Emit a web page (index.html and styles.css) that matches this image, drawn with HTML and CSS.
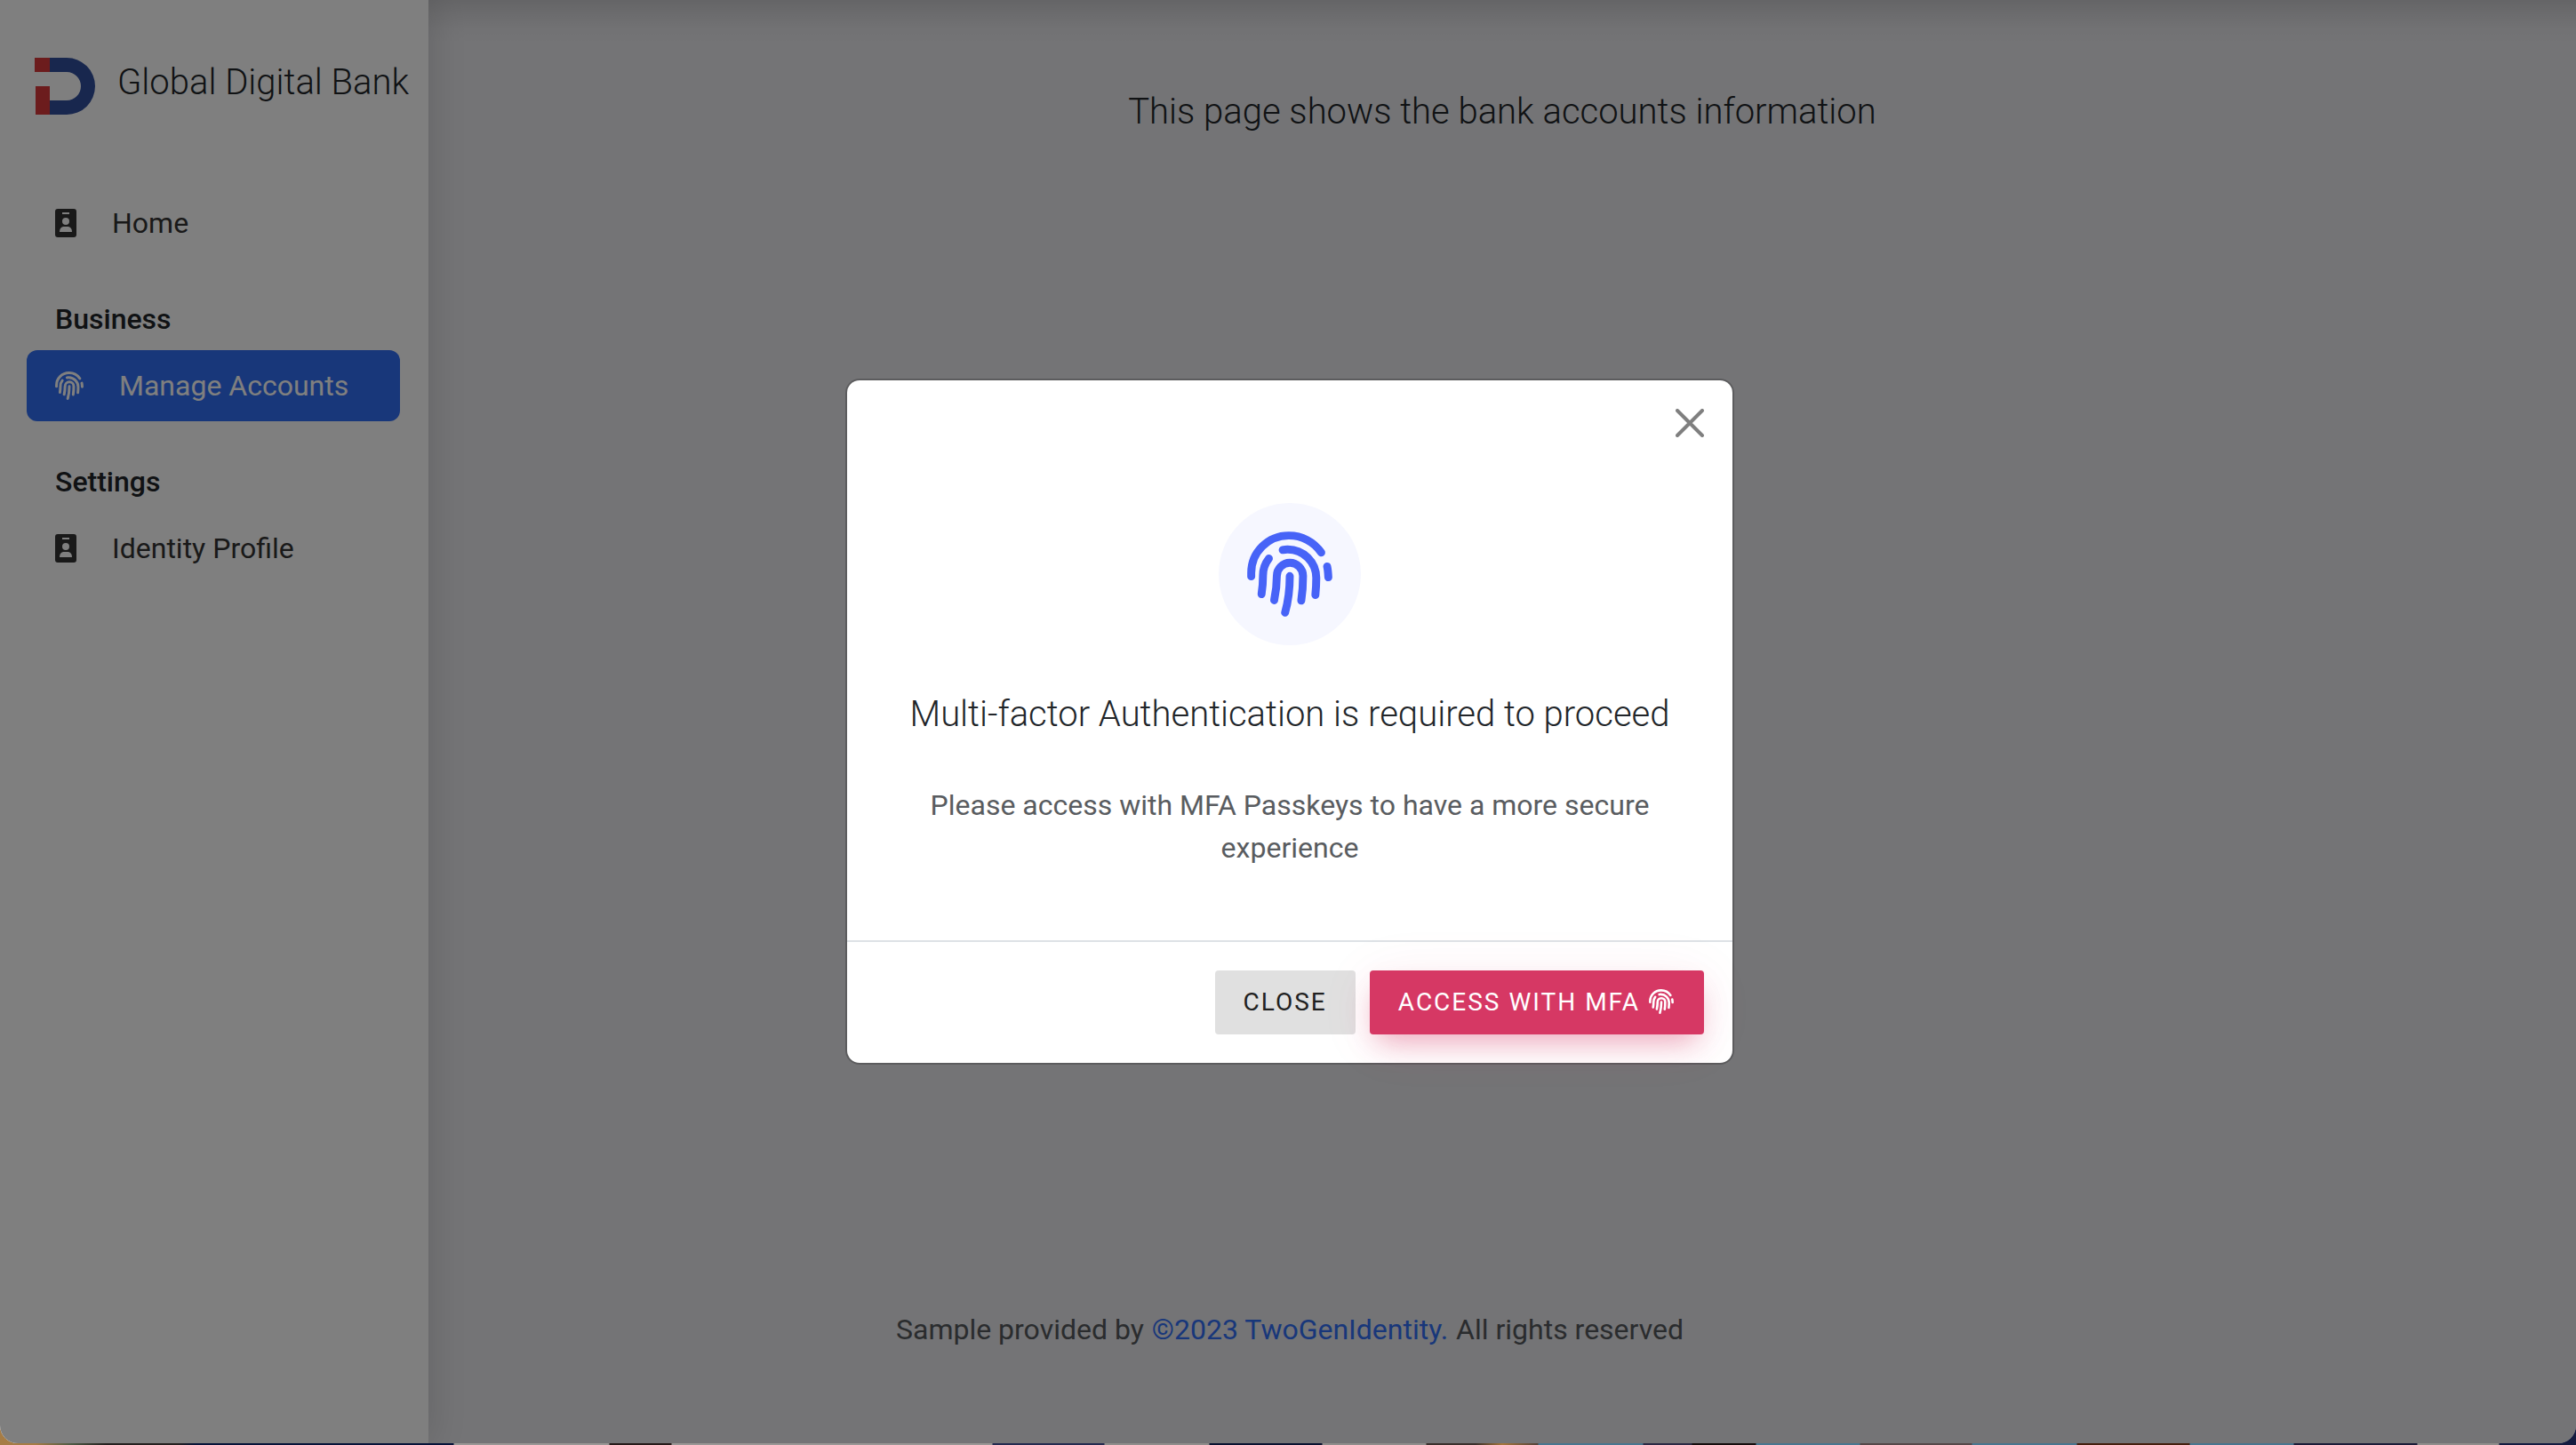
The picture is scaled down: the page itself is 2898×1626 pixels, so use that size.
FILE: index.html
```
<!DOCTYPE html>
<html lang="en">
<head>
<meta charset="utf-8">
<title>Global Digital Bank</title>
<link rel="stylesheet" href="styles.css">
</head>
<body>
<svg class="sprite" aria-hidden="true">
  <symbol id="fingerprint" viewBox="128 143 290 290">
    <g fill="none" stroke="currentColor" stroke-width="27" stroke-linecap="round">
      <path d="M142 296V284A127 127 0 0 1 269 157A132 132 0 0 1 380 215"/>
      <path d="M249 206Q257 204 265 204A97 97 0 0 1 363 301Q363 330 360 359"/>
      <path d="M202 235C187 254 182 270 182 292Q182 325 177 356"/>
      <path d="M220 377C227 345 229 320 229 294A44.500 44.500 0 0 1 318 294Q318 340 312 378"/>
      <path d="M273 295C273 340 268 380 257 419"/>
      <path d="M400 262Q403 275 404 299"/>
    </g>
  </symbol>
  <symbol id="badge" viewBox="0 0 24 32">
    <path fill="currentColor" fill-rule="evenodd" d="M3 0H21A3 3 0 0 1 24 3V29A3 3 0 0 1 21 32H3A3 3 0 0 1 0 29V3A3 3 0 0 1 3 0ZM8 4V6H16V4ZM12 10A4 4 0 1 0 12 18A4 4 0 1 0 12 10ZM9 20Q5 21 5 26H19Q19 21 15 20Z"/>
  </symbol>
</svg>

<div class="app">
  <aside class="sidebar">
    <header class="brand">
      <svg class="brand-logo" viewBox="0 0 68 64" aria-hidden="true">
        <path fill="#d8383a" d="M0 0H17V16H0ZM1 32H17V64H1Z"/>
        <path fill="#304e9c" d="M17 0H36A32 32 0 0 1 36 64H17V48H36A16 16 0 0 0 36 16H17Z"/>
      </svg>
      <span class="brand-name">Global Digital Bank</span>
    </header>
    <nav class="nav">
      <a class="nav-link" href="#home"><svg class="icon-badge" aria-hidden="true"><use href="#badge"/></svg>Home</a>
      <h2 class="nav-heading">Business</h2>
      <a class="nav-link active" href="#accounts"><svg class="icon-print" aria-hidden="true"><use href="#fingerprint"/></svg>Manage Accounts</a>
      <h2 class="nav-heading">Settings</h2>
      <a class="nav-link" href="#profile"><svg class="icon-badge" aria-hidden="true"><use href="#badge"/></svg>Identity Profile</a>
    </nav>
  </aside>
  <main class="content">
    <h1 class="page-title">This page shows the bank accounts information</h1>
  </main>
  <footer class="page-footer">
    <p>Sample provided by <a href="#twogenidentity">©2023 TwoGenIdentity.</a> All rights reserved</p>
  </footer>
  <div class="backdrop">
    <section class="modal" role="dialog" aria-modal="true" aria-labelledby="modal-title">
      <header class="modal-header">
        <button class="modal-close" type="button" aria-label="Close dialog">
          <svg viewBox="0 0 32 32" aria-hidden="true"><path d="M2 2L30 30M30 2L2 30" fill="none" stroke="currentColor" stroke-width="4" stroke-linecap="round"/></svg>
        </button>
      </header>
      <div class="modal-body">
        <div class="emblem"><svg aria-hidden="true"><use href="#fingerprint"/></svg></div>
        <h2 class="modal-title" id="modal-title">Multi-factor Authentication is required to proceed</h2>
        <p class="modal-text">Please access with MFA Passkeys to have a more secure experience</p>
      </div>
      <footer class="modal-footer">
        <button class="button button-light" type="button">Close</button>
        <button class="button button-primary" type="button">Access with MFA<svg aria-hidden="true"><use href="#fingerprint"/></svg></button>
      </footer>
    </section>
  </div>
</div>
</body>
</html>
```
FILE: styles.css
```
* { box-sizing: border-box; }

body {
  margin: 0;
  min-height: 100vh;
  display: flex;
  flex-direction: column;
  padding-bottom: 2px;
  background:
    linear-gradient(90deg, #a67c45 0 40px, #4f5b45 80px, #25201f 120px 200px, #08143a 220px 510px,
      #999795 511px 685px, #271b1a 686px 755px, #999795 756px 1116px, #252b50 1117px 1242px,
      #8f8d8b 1243px 1360px, #0a1230 1361px 1487px, #8f8d8b 1488px 1604px, #3b302c 1605px 1660px,
      #a6763c 1690px, #54433b 1730px, #49768f 1731px 1848px, #2c2a45 1849px 1903px, #160e0e 1904px 1975px,
      #49768f 1976px 2092px, #554849 2093px 2218px, #49768f 2219px 2336px, #45200f 2337px 2463px,
      #49768f 2464px 2580px, #1c1c38 2581px 2719px, #8f8d8b 2720px 2811px, #141b40 2812px);
  color: #212529;
  font-family: Roboto, "Liberation Sans", sans-serif;
  font-size: 32px;
  line-height: 48px;
}

h1, h2, p { margin: 0; }
a { text-decoration: none; }
.sprite { display: none; }

.app {
  position: relative;
  flex: 1;
  display: grid;
  grid-template: 1fr auto / 482px 1fr;
  overflow: hidden;
  border-radius: 0 0 20px 20px;
  background: #e8e8ec;
}

.sidebar {
  grid-area: 1 / 1 / 3 / 2;
  padding: 65px 32px 0 30px;
  background: #fff;
  box-shadow: 0 0 40px rgba(0, 0, 0, 0.15);
}

.brand {
  display: flex;
  gap: 25px;
  margin: 0 -32px 82px 9px;
}

.brand-logo { width: 68px; height: 64px; }

.brand-name {
  margin-top: 4px;
  font-size: 40px;
  font-weight: 300;
  white-space: nowrap;
}

.nav-link {
  display: flex;
  align-items: center;
  gap: 40px;
  height: 80px;
  padding: 0 32px;
  border-radius: 12px;
  color: #333;
}

.nav-link.active { background: #306ef4; color: #fff; }

.nav-heading {
  padding: 44px 32px 11px;
  font-size: 32px;
  font-weight: 500;
}

.icon-badge { width: 24px; height: 32px; }
.icon-print { width: 32px; height: 32px; }

.content {
  grid-area: 1 / 2;
  padding: 102px 32px 0;
  text-align: center;
  background: linear-gradient(rgba(0, 0, 0, 0.13), rgba(0, 0, 0, 0.07) 16px, rgba(0, 0, 0, 0.02) 32px, transparent 48px);
}

.page-title { font-size: 40px; font-weight: 300; line-height: 48px; }

.page-footer {
  grid-area: 2 / 1 / 3 / 3;
  padding: 0 0 104px 4px;
  color: #55585c;
  text-align: center;
}

.page-footer a { padding: 0 1px; color: #306ef4; }

.backdrop {
  position: absolute;
  inset: 0;
  display: flex;
  align-items: center;
  justify-content: center;
  padding-left: 4px;
  background: rgba(0, 0, 0, 0.5);
}

.modal {
  width: 1000px;
  max-width: 100%;
  border: 2px solid rgba(0, 0, 0, 0.2);
  border-radius: 16px;
  background: #fff;
  background-clip: padding-box;
}

.modal-header {
  display: flex;
  justify-content: flex-end;
  padding: 32px;
}

.modal-close {
  width: 32px;
  height: 32px;
  padding: 0;
  border: 0;
  background: none;
  color: #7f7f7f;
}

.modal-close svg { display: block; width: 32px; height: 32px; }

.modal-body {
  display: flex;
  flex-direction: column;
  align-items: center;
  gap: 54px;
  padding: 42px 32px 80px;
  text-align: center;
}

.emblem {
  display: flex;
  align-items: center;
  justify-content: center;
  width: 160px;
  height: 160px;
  border-radius: 50%;
  background: #f6f7ff;
  color: #4763f7;
}

.emblem svg { width: 96px; height: 96px; }

.modal-title { font-size: 40px; font-weight: 300; }

.modal-text { color: #595c60; }

.modal-footer {
  display: flex;
  justify-content: flex-end;
  gap: 16px;
  padding: 32px;
  border-top: 2px solid #dee2e6;
}

.button {
  display: flex;
  align-items: center;
  gap: 10px;
  height: 72px;
  padding: 0 32px 2px;
  border: 0;
  border-radius: 4px;
  font-family: inherit;
  font-size: 28px;
  letter-spacing: 2px;
  text-transform: uppercase;
}

.button svg { width: 28px; height: 28px; margin-right: 2px; }
.button-light { background: #e0e0e0; color: #212121; }

.button-primary {
  background: #d63864;
  color: #fff;
  box-shadow: 0 16px 32px -8px rgba(214, 56, 100, 0.4), 0 8px 64px rgba(214, 56, 100, 0.08);
}
```
